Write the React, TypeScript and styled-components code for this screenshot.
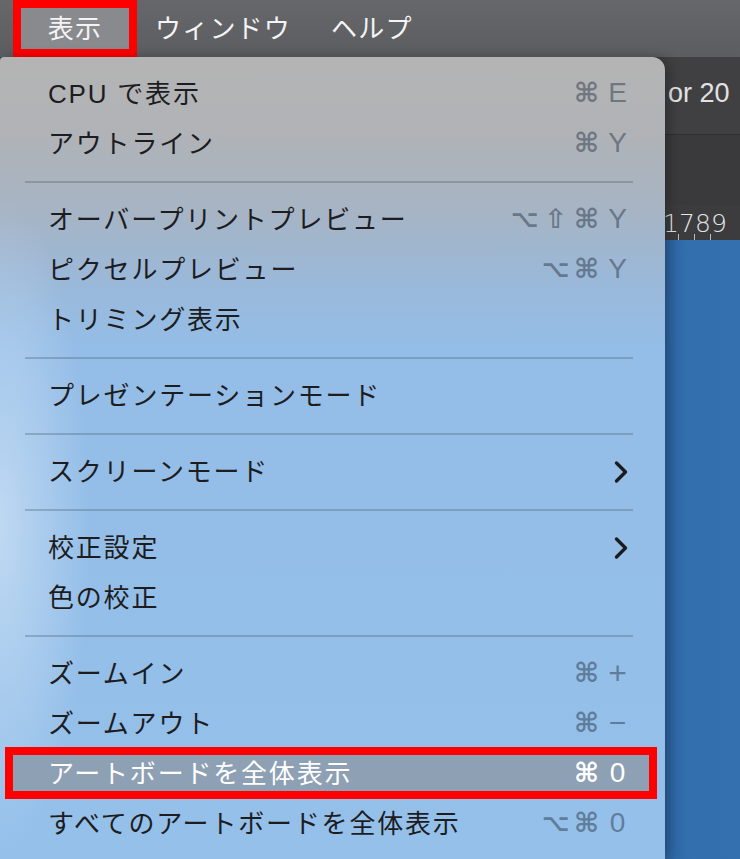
import React from "react";
import styled, { createGlobalStyle } from "styled-components";

const GlobalStyle = createGlobalStyle`
  html, body { margin: 0; padding: 0; background: #3e3e40; overflow: hidden; }
  * { box-sizing: border-box; }
`;

const FONT = `"Liberation Sans", "Noto Sans CJK JP", "DejaVu Sans", sans-serif`;

const Screen = styled.div`
  position: relative;
  width: 740px;
  height: 859px;
  overflow: hidden;
  display: flex;
  flex-direction: column;
  font-family: ${FONT};
`;

const MenuBar = styled.div`
  height: 57px;
  flex: none;
  display: flex;
  align-items: stretch;
  padding-left: 13px;
  background: linear-gradient(180deg, #66676b 0%, #5c5d61 100%);
`;

const MenuTitle = styled.div<{ $active?: boolean }>`
  display: flex;
  align-items: center;
  justify-content: center;
  padding: ${(p) => (p.$active ? "0 0 5px" : "0 22px 5px 18px")};
  width: ${(p) => (p.$active ? "124px" : "auto")};
  font-size: 26px;
  letter-spacing: 1.2px;
  color: #f4f4f4;
  background: ${(p) => (p.$active ? "#898a8e" : "transparent")};
  border: ${(p) => (p.$active ? "8px solid #ff0000" : "none")};
`;

const TitleBand = styled.div`
  height: 78px;
  flex: none;
  background: #404042;
  border-bottom: 1px solid #2f2f31;
  display: flex;
  align-items: center;
  padding: 0 0 4px 668px;
  color: #e2e2e2;
  font-size: 27px;
  white-space: nowrap;
`;

const ToolBand = styled.div`
  height: 70px;
  flex: none;
  background: #3a3a3c;
`;

const Ruler = styled.div`
  height: 35px;
  flex: none;
  background: #3c3c3e;
  display: flex;
  align-items: flex-end;
  padding-left: 662px;
  color: #e6e6e6;
  font-size: 25px;
  font-family: "DejaVu Sans", sans-serif;
  font-weight: 300;
  white-space: nowrap;
`;

const Digit = styled.span`
  display: inline-block;
  width: 16px;
  text-align: center;
  line-height: 32px;
  border-left: 1px solid #bdbdbd;
  border-image: linear-gradient(180deg, transparent 80%, #bdbdbd 80%) 1;
`;

const Canvas = styled.div`
  flex: 1;
  background: linear-gradient(90deg, #2a5f98 660px, #2f69a7 676px, #336fae 690px, #3470b0 100%);
`;

const Panel = styled.div`
  position: absolute;
  top: 57px;
  left: 0;
  width: 665px;
  height: 802px;
  padding-top: 12px;
  border-radius: 4px 13px 0 0;
  background:
    radial-gradient(ellipse 90px 330px at 0px 470px, rgba(225, 238, 250, 0.55), rgba(225, 238, 250, 0) 100%),
    linear-gradient(180deg, #b4b4b4 0px, #b1b3b6 70px, #a7b4c3 150px, #9bb8d8 220px, #94bde7 290px, #94c0ea 100%);
  box-shadow: 4px 0 12px rgba(0, 0, 0, 0.25);
  display: flex;
  flex-direction: column;
`;

const Item = styled.div<{ $selected?: boolean }>`
  position: relative;
  height: 50px;
  flex: none;
  margin: 0 8px 0 5px;
  padding: 0 24px 0 43px;
  display: flex;
  align-items: center;
  justify-content: space-between;
  background: ${(p) => (p.$selected ? "#8ea0b4" : "transparent")};
  color: ${(p) => (p.$selected ? "#ffffff" : "#1d1d1f")};
`;

const Label = styled.span`
  font-size: 26px;
  letter-spacing: 1.8px;
  white-space: nowrap;
  margin-bottom: 6px;
`;

const Shortcut = styled.span<{ $selected?: boolean }>`
  display: flex;
  align-items: center;
  color: ${(p) => (p.$selected ? "#ffffff" : "rgba(45, 58, 75, 0.5)")};
  margin-bottom: 2px;
`;

const Key = styled.span<{ $size: number; $bold?: boolean; $symbol?: boolean }>`
  width: 31px;
  text-align: center;
  overflow: hidden;
  font-family: ${(p) => (p.$symbol ? `"DejaVu Sans", sans-serif` : `"Liberation Sans", sans-serif`)};
  font-size: ${(p) => p.$size}px;
  font-weight: ${(p) => (p.$bold ? 700 : 400)};
  line-height: 34px;
`;

const Chevron = styled.svg`
  width: 14px;
  height: 24px;
  margin-right: 5px;
`;

const Annotation = styled.span`
  position: absolute;
  top: -2px;
  bottom: 0;
  left: 0;
  right: 0;
  border: 8px solid #ff0000;
  pointer-events: none;
`;

const Separator = styled.div`
  height: 26px;
  flex: none;
  display: flex;
  align-items: center;
  margin: 0 32px 0 25px;
  &::after {
    content: "";
    flex: 1;
    height: 2px;
    background: rgba(70, 90, 110, 0.32);
  }
`;

type Entry =
  | { kind: "sep" }
  | { kind: "item"; label: string; keys?: string[]; sub?: boolean; selected?: boolean };

const KEY_STYLE: Record<string, { size: number; bold?: boolean; symbol?: boolean }> = {
  "⌘": { size: 27, bold: true, symbol: true },
  "⌥": { size: 24, bold: true, symbol: true },
  "⇧": { size: 27, bold: true, symbol: true },
  "+": { size: 32 },
  "−": { size: 30 },
};

const entries: Entry[] = [
  { kind: "item", label: "CPU で表示", keys: ["⌘", "E"] },
  { kind: "item", label: "アウトライン", keys: ["⌘", "Y"] },
  { kind: "sep" },
  { kind: "item", label: "オーバープリントプレビュー", keys: ["⌥", "⇧", "⌘", "Y"] },
  { kind: "item", label: "ピクセルプレビュー", keys: ["⌥", "⌘", "Y"] },
  { kind: "item", label: "トリミング表示" },
  { kind: "sep" },
  { kind: "item", label: "プレゼンテーションモード" },
  { kind: "sep" },
  { kind: "item", label: "スクリーンモード", sub: true },
  { kind: "sep" },
  { kind: "item", label: "校正設定", sub: true },
  { kind: "item", label: "色の校正" },
  { kind: "sep" },
  { kind: "item", label: "ズームイン", keys: ["⌘", "+"] },
  { kind: "item", label: "ズームアウト", keys: ["⌘", "−"] },
  { kind: "item", label: "アートボードを全体表示", keys: ["⌘", "0"], selected: true },
  { kind: "item", label: "すべてのアートボードを全体表示", keys: ["⌥", "⌘", "0"] },
];

export default function App() {
  return (
    <>
      <GlobalStyle />
      <Screen>
        <MenuBar>
          <MenuTitle $active>表示</MenuTitle>
          <MenuTitle>ウィンドウ</MenuTitle>
          <MenuTitle>ヘルプ</MenuTitle>
        </MenuBar>
        <TitleBand>or 20</TitleBand>
        <ToolBand />
        <Ruler>
          <Digit>1</Digit>
          <Digit>7</Digit>
          <Digit>8</Digit>
          <Digit>9</Digit>
        </Ruler>
        <Canvas />
        <Panel>
          {entries.map((e, i) =>
            e.kind === "sep" ? (
              <Separator key={i} />
            ) : (
              <Item key={i} $selected={e.selected}>
                <Label>{e.label}</Label>
                {e.keys && (
                  <Shortcut $selected={e.selected}>
                    {e.keys.map((k, j) => {
                      const s = KEY_STYLE[k] ?? { size: 28 };
                      return (
                        <Key key={j} $size={s.size} $bold={s.bold} $symbol={s.symbol}>
                          {k}
                        </Key>
                      );
                    })}
                  </Shortcut>
                )}
                {e.sub && (
                  <Chevron viewBox="0 0 14 24">
                    <path d="M2.5 3 L11.5 12 L2.5 21" fill="none" stroke="#1c1c1e" strokeWidth="3.4" strokeLinecap="round" strokeLinejoin="round" />
                  </Chevron>
                )}
                {e.selected && <Annotation />}
              </Item>
            )
          )}
        </Panel>
      </Screen>
    </>
  );
}
